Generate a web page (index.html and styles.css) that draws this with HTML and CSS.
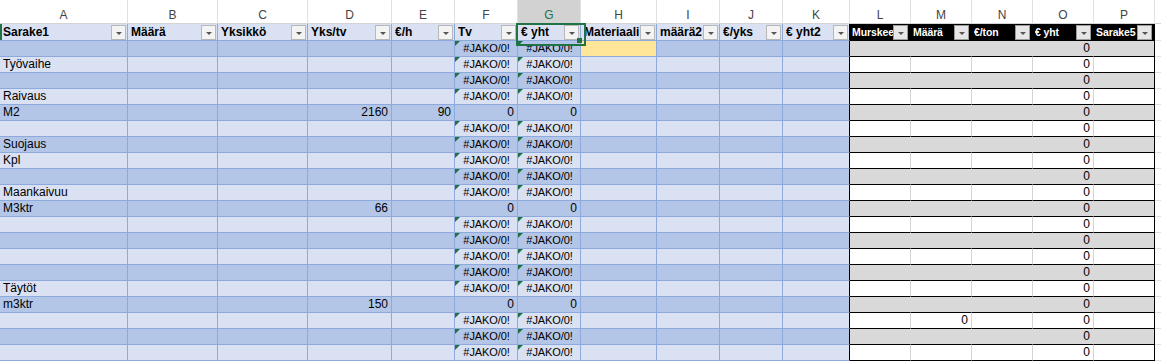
FILE: index.html
```html
<!DOCTYPE html>
<html lang="fi">
<head>
<meta charset="utf-8">
<title>Taulukko</title>
<link rel="stylesheet" href="styles.css">
</head>
<body>
<div class="sheet">
  <div class="row letters">
    <div class="l">A</div><div class="l">B</div><div class="l">C</div><div class="l">D</div><div class="l">E</div><div class="l">F</div><div class="l sel">G</div><div class="l">H</div><div class="l">I</div><div class="l">J</div><div class="l">K</div><div class="l">L</div><div class="l">M</div><div class="l">N</div><div class="l">O</div><div class="l">P</div><div class="l fl"></div>
  </div>

  <div class="row hdr">
    <div class="c first"><span class="t">Sarake1</span><span class="dd"></span></div>
    <div class="c"><span class="t">Määrä</span><span class="dd"></span></div>
    <div class="c"><span class="t">Yksikkö</span><span class="dd"></span></div>
    <div class="c"><span class="t">Yks/tv</span><span class="dd"></span></div>
    <div class="c"><span class="t">€/h</span><span class="dd"></span></div>
    <div class="c"><span class="t">Tv</span><span class="dd"></span></div>
    <div class="c selcell"><span class="t">€ yht</span><span class="dd"></span></div>
    <div class="c"><span class="t">Materiaali</span><span class="dd"></span></div>
    <div class="c"><span class="t">määrä2</span><span class="dd"></span></div>
    <div class="c"><span class="t">€/yks</span><span class="dd"></span></div>
    <div class="c k"><span class="t">€ yht2</span><span class="dd"></span></div>
    <div class="c x"><span class="t">Murskee</span><span class="dd"></span></div>
    <div class="c x"><span class="t">Määrä</span><span class="dd"></span></div>
    <div class="c x"><span class="t">€/ton</span><span class="dd"></span></div>
    <div class="c x"><span class="t">€ yht</span><span class="dd"></span></div>
    <div class="c x p"><span class="t">Sarake5</span><span class="dd"></span></div>
    <div class="c f"></div>
  </div>

  <div class="row dark">
    <div class="c"></div><div class="c"></div><div class="c"></div><div class="c"></div><div class="c"></div><div class="c err">#JAKO/0!</div><div class="c err">#JAKO/0!</div><div class="c yel"></div><div class="c"></div><div class="c"></div><div class="c k"></div><div class="c x"></div><div class="c x"></div><div class="c x"></div><div class="c x num">0</div><div class="c x p"></div><div class="c f"></div>
  </div>
  <div class="row light">
    <div class="c">Työvaihe</div><div class="c"></div><div class="c"></div><div class="c"></div><div class="c"></div><div class="c err">#JAKO/0!</div><div class="c err">#JAKO/0!</div><div class="c"></div><div class="c"></div><div class="c"></div><div class="c k"></div><div class="c x"></div><div class="c x"></div><div class="c x"></div><div class="c x num">0</div><div class="c x p"></div><div class="c f"></div>
  </div>
  <div class="row dark">
    <div class="c"></div><div class="c"></div><div class="c"></div><div class="c"></div><div class="c"></div><div class="c err">#JAKO/0!</div><div class="c err">#JAKO/0!</div><div class="c"></div><div class="c"></div><div class="c"></div><div class="c k"></div><div class="c x"></div><div class="c x"></div><div class="c x"></div><div class="c x num">0</div><div class="c x p"></div><div class="c f"></div>
  </div>
  <div class="row light">
    <div class="c">Raivaus</div><div class="c"></div><div class="c"></div><div class="c"></div><div class="c"></div><div class="c err">#JAKO/0!</div><div class="c err">#JAKO/0!</div><div class="c"></div><div class="c"></div><div class="c"></div><div class="c k"></div><div class="c x"></div><div class="c x"></div><div class="c x"></div><div class="c x num">0</div><div class="c x p"></div><div class="c f"></div>
  </div>
  <div class="row dark">
    <div class="c">M2</div><div class="c"></div><div class="c"></div><div class="c num">2160</div><div class="c num">90</div><div class="c num">0</div><div class="c num">0</div><div class="c"></div><div class="c"></div><div class="c"></div><div class="c k"></div><div class="c x"></div><div class="c x"></div><div class="c x"></div><div class="c x num">0</div><div class="c x p"></div><div class="c f"></div>
  </div>
  <div class="row light">
    <div class="c"></div><div class="c"></div><div class="c"></div><div class="c"></div><div class="c"></div><div class="c err">#JAKO/0!</div><div class="c err">#JAKO/0!</div><div class="c"></div><div class="c"></div><div class="c"></div><div class="c k"></div><div class="c x"></div><div class="c x"></div><div class="c x"></div><div class="c x num">0</div><div class="c x p"></div><div class="c f"></div>
  </div>
  <div class="row dark">
    <div class="c">Suojaus</div><div class="c"></div><div class="c"></div><div class="c"></div><div class="c"></div><div class="c err">#JAKO/0!</div><div class="c err">#JAKO/0!</div><div class="c"></div><div class="c"></div><div class="c"></div><div class="c k"></div><div class="c x"></div><div class="c x"></div><div class="c x"></div><div class="c x num">0</div><div class="c x p"></div><div class="c f"></div>
  </div>
  <div class="row light">
    <div class="c">Kpl</div><div class="c"></div><div class="c"></div><div class="c"></div><div class="c"></div><div class="c err">#JAKO/0!</div><div class="c err">#JAKO/0!</div><div class="c"></div><div class="c"></div><div class="c"></div><div class="c k"></div><div class="c x"></div><div class="c x"></div><div class="c x"></div><div class="c x num">0</div><div class="c x p"></div><div class="c f"></div>
  </div>
  <div class="row dark">
    <div class="c"></div><div class="c"></div><div class="c"></div><div class="c"></div><div class="c"></div><div class="c err">#JAKO/0!</div><div class="c err">#JAKO/0!</div><div class="c"></div><div class="c"></div><div class="c"></div><div class="c k"></div><div class="c x"></div><div class="c x"></div><div class="c x"></div><div class="c x num">0</div><div class="c x p"></div><div class="c f"></div>
  </div>
  <div class="row light">
    <div class="c">Maankaivuu</div><div class="c"></div><div class="c"></div><div class="c"></div><div class="c"></div><div class="c err">#JAKO/0!</div><div class="c err">#JAKO/0!</div><div class="c"></div><div class="c"></div><div class="c"></div><div class="c k"></div><div class="c x"></div><div class="c x"></div><div class="c x"></div><div class="c x num">0</div><div class="c x p"></div><div class="c f"></div>
  </div>
  <div class="row dark">
    <div class="c">M3ktr</div><div class="c"></div><div class="c"></div><div class="c num">66</div><div class="c"></div><div class="c num">0</div><div class="c num">0</div><div class="c"></div><div class="c"></div><div class="c"></div><div class="c k"></div><div class="c x"></div><div class="c x"></div><div class="c x"></div><div class="c x num">0</div><div class="c x p"></div><div class="c f"></div>
  </div>
  <div class="row light">
    <div class="c"></div><div class="c"></div><div class="c"></div><div class="c"></div><div class="c"></div><div class="c err">#JAKO/0!</div><div class="c err">#JAKO/0!</div><div class="c"></div><div class="c"></div><div class="c"></div><div class="c k"></div><div class="c x"></div><div class="c x"></div><div class="c x"></div><div class="c x num">0</div><div class="c x p"></div><div class="c f"></div>
  </div>
  <div class="row dark">
    <div class="c"></div><div class="c"></div><div class="c"></div><div class="c"></div><div class="c"></div><div class="c err">#JAKO/0!</div><div class="c err">#JAKO/0!</div><div class="c"></div><div class="c"></div><div class="c"></div><div class="c k"></div><div class="c x"></div><div class="c x"></div><div class="c x"></div><div class="c x num">0</div><div class="c x p"></div><div class="c f"></div>
  </div>
  <div class="row light">
    <div class="c"></div><div class="c"></div><div class="c"></div><div class="c"></div><div class="c"></div><div class="c err">#JAKO/0!</div><div class="c err">#JAKO/0!</div><div class="c"></div><div class="c"></div><div class="c"></div><div class="c k"></div><div class="c x"></div><div class="c x"></div><div class="c x"></div><div class="c x num">0</div><div class="c x p"></div><div class="c f"></div>
  </div>
  <div class="row dark">
    <div class="c"></div><div class="c"></div><div class="c"></div><div class="c"></div><div class="c"></div><div class="c err">#JAKO/0!</div><div class="c err">#JAKO/0!</div><div class="c"></div><div class="c"></div><div class="c"></div><div class="c k"></div><div class="c x"></div><div class="c x"></div><div class="c x"></div><div class="c x num">0</div><div class="c x p"></div><div class="c f"></div>
  </div>
  <div class="row light">
    <div class="c">Täytöt</div><div class="c"></div><div class="c"></div><div class="c"></div><div class="c"></div><div class="c err">#JAKO/0!</div><div class="c err">#JAKO/0!</div><div class="c"></div><div class="c"></div><div class="c"></div><div class="c k"></div><div class="c x"></div><div class="c x"></div><div class="c x"></div><div class="c x num">0</div><div class="c x p"></div><div class="c f"></div>
  </div>
  <div class="row dark">
    <div class="c">m3ktr</div><div class="c"></div><div class="c"></div><div class="c num">150</div><div class="c"></div><div class="c num">0</div><div class="c num">0</div><div class="c"></div><div class="c"></div><div class="c"></div><div class="c k"></div><div class="c x"></div><div class="c x"></div><div class="c x"></div><div class="c x num">0</div><div class="c x p"></div><div class="c f"></div>
  </div>
  <div class="row light">
    <div class="c"></div><div class="c"></div><div class="c"></div><div class="c"></div><div class="c"></div><div class="c err">#JAKO/0!</div><div class="c err">#JAKO/0!</div><div class="c"></div><div class="c"></div><div class="c"></div><div class="c k"></div><div class="c x"></div><div class="c x num">0</div><div class="c x"></div><div class="c x num">0</div><div class="c x p"></div><div class="c f"></div>
  </div>
  <div class="row dark">
    <div class="c"></div><div class="c"></div><div class="c"></div><div class="c"></div><div class="c"></div><div class="c err">#JAKO/0!</div><div class="c err">#JAKO/0!</div><div class="c"></div><div class="c"></div><div class="c"></div><div class="c k"></div><div class="c x"></div><div class="c x"></div><div class="c x"></div><div class="c x num">0</div><div class="c x p"></div><div class="c f"></div>
  </div>
  <div class="row light">
    <div class="c"></div><div class="c"></div><div class="c"></div><div class="c"></div><div class="c"></div><div class="c err">#JAKO/0!</div><div class="c err">#JAKO/0!</div><div class="c"></div><div class="c"></div><div class="c"></div><div class="c k"></div><div class="c x"></div><div class="c x"></div><div class="c x"></div><div class="c x num">0</div><div class="c x p"></div><div class="c f"></div>
  </div>
</div>
</body>
</html>
```

FILE: styles.css
```css
* {
  box-sizing: border-box;
}

body {
  margin: 0;
  background: #ffffff;
  font-family: "Liberation Sans", Arial, sans-serif;
  font-size: 12px;
  color: #000000;
  overflow: hidden;
}

.sheet {
  width: 1161px;
}

.row {
  display: grid;
  grid-template-columns: 128px 90px 90px 84px 63px 63px 63px 76px 63px 63px 67px 61px 61px 61px 61px 61px 6px;
}

/* column letters */
.letters .l {
  height: 24px;
  padding-top: 7px;
  line-height: 16px;
  text-align: center;
  color: #444444;
  background: #ffffff;
  border-right: 1px solid #e1e1e1;
  border-bottom: 1px solid #d4d4d4;
}

.letters .sel {
  background: #d2d2d2;
  color: #217346;
}

.letters .fl {
  border-right: none;
}

/* cells */
.c {
  position: relative;
  height: 16px;
  line-height: 15px;
  padding: 0 3px;
  white-space: nowrap;
  overflow: hidden;
  border-right: 1px solid #8ea9db;
  border-bottom: 1px solid #8ea9db;
}

.dark .c {
  background: #b4c6e7;
}

.light .c {
  background: #d9e1f2;
}

.num {
  text-align: right;
}

.err {
  text-align: center;
  padding: 0 0 0 1px;
  font-size: 11px;
  letter-spacing: -0.1px;
}

.err::before {
  content: "";
  position: absolute;
  left: 0;
  top: 0;
  border-top: 5px solid #1e7145;
  border-right: 5px solid transparent;
}

.row .c.yel {
  background: #ffe699;
}

.row .c.k {
  border-right-color: #000000;
}

/* right-hand table */
.x {
  border-bottom-color: #000000;
}

.dark .x {
  background: #d9d9d9;
  border-right-color: #d9d9d9;
}

.light .x {
  background: #ffffff;
  border-right-color: #d4d4d4;
}

.row .c.x.p {
  border-right-color: #000000;
}

.row .c.f {
  background: #ffffff;
  border-right: none;
  border-bottom: 1px solid #e1e1e1;
}

/* header row */
.hdr .c {
  height: 17px;
  display: flex;
  align-items: center;
  padding: 0 1px 0 3px;
  font-weight: bold;
  background: #d9e1f2;
  overflow: visible;
}

.hdr .c.x {
  background: #000000;
  color: #ffffff;
  border-right-color: #000000;
  border-bottom-color: #000000;
  padding: 0 2px 0 2px;
  font-size: 10.5px;
  letter-spacing: -0.1px;
}

.t {
  flex: 1;
  min-width: 0;
  overflow: hidden;
  white-space: nowrap;
  line-height: 16px;
}

.dd {
  position: relative;
  flex: none;
  width: 15px;
  height: 15px;
  border: 1px solid #b8b8b8;
  background: #f3f3f3;
}

.dd::after {
  content: "";
  position: absolute;
  left: 4px;
  top: 6px;
  border-left: 3px solid transparent;
  border-right: 3px solid transparent;
  border-top: 3px solid #555555;
}

.hdr .x .dd {
  background: #e6e6e6;
  border-color: #9a9a9a;
}

.first {
  box-shadow: inset 2px 0 0 #217346;
}

/* selected cell G1 */
.selcell {
  z-index: 2;
}

.selcell::before {
  content: "";
  position: absolute;
  left: -2px;
  top: -1px;
  width: 66px;
  height: 19px;
  border: 2px solid #217346;
  pointer-events: none;
}

.selcell::after {
  content: "";
  position: absolute;
  left: 59px;
  top: 14px;
  width: 5px;
  height: 5px;
  background: #217346;
}
```
